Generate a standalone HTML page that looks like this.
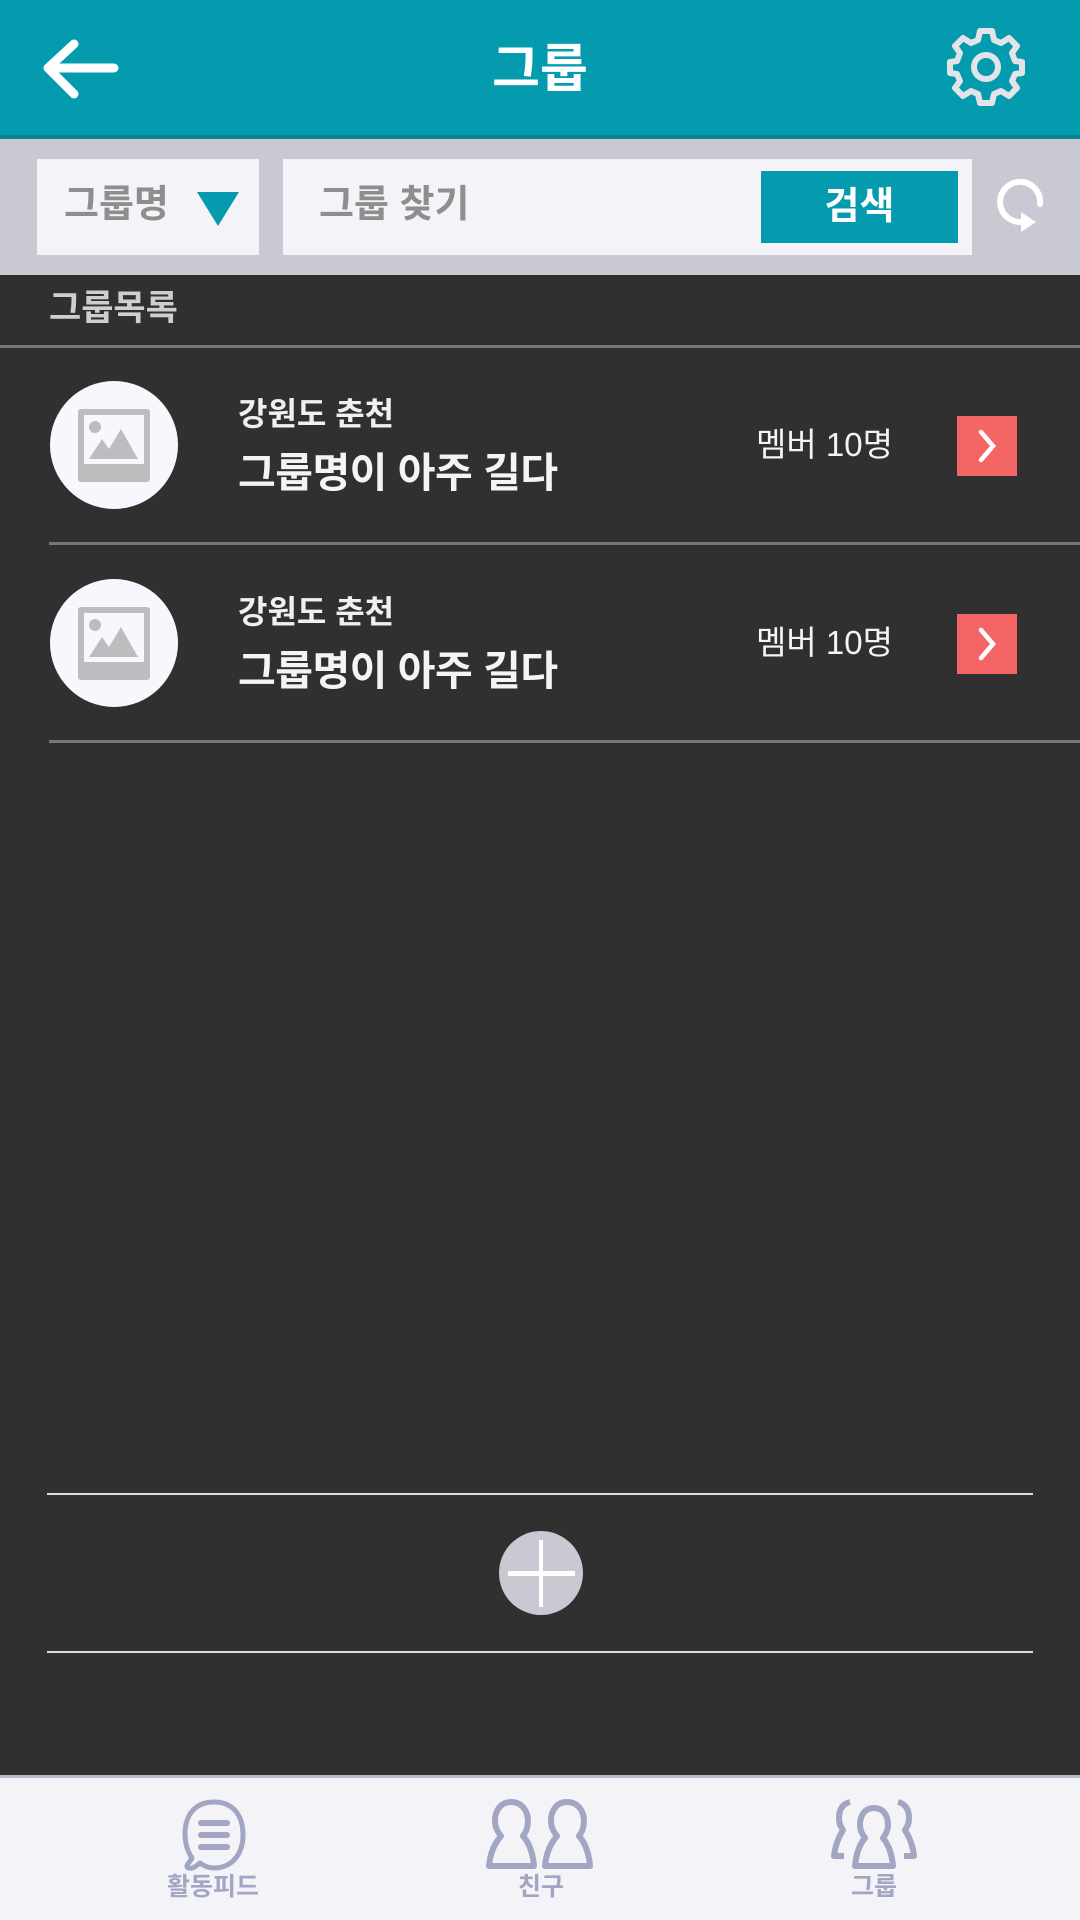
<!DOCTYPE html>
<html><head><meta charset="utf-8"><style>
*{margin:0;padding:0;box-sizing:border-box}
body{width:1080px;height:1920px;background:#303030;position:relative;overflow:hidden;font-family:"Liberation Sans","Noto Sans CJK KR",sans-serif}
.abs{position:absolute}
.t{white-space:nowrap;line-height:1}
</style></head><body>
<!-- header -->
<div class="abs" style="left:0;top:0;width:1080px;height:135px;background:#039bad"></div>
<div class="abs" style="left:0;top:135px;width:1080px;height:4px;background:#058592"></div>
<svg class="abs" style="left:40px;top:38px" width="80" height="64" viewBox="0 0 80 64"><path d="M34 6 L8 30 L34 56 M8 30 L74 30" fill="none" stroke="#fff" stroke-width="9" stroke-linecap="round" stroke-linejoin="round"/></svg>
<div class="abs t" style="left:0;width:1080px;top:44px;text-align:center;color:#fff;font-size:52px;font-weight:bold">그룹</div>
<svg class="abs" style="left:946px;top:27px" width="80" height="80" viewBox="-40 -40 80 80">
<path d="M-6 -36 L6 -36 L8 -27 L15 -24 L23 -29 L31 -21 L26 -14 L29 -6 L36 -5 L36 6 L29 7 L26 14 L31 21 L23 29 L15 24 L8 27 L6 36 L-6 36 L-8 27 L-15 24 L-23 29 L-31 21 L-26 14 L-29 7 L-36 6 L-36 -5 L-29 -6 L-26 -14 L-31 -21 L-23 -29 L-15 -24 L-8 -27 Z" fill="none" stroke="#e4e4e8" stroke-width="6" stroke-linejoin="round"/>
<circle r="12" fill="none" stroke="#e4e4e8" stroke-width="6"/></svg>
<!-- search bar -->
<div class="abs" style="left:0;top:139px;width:1080px;height:136px;background:#c9c9d3"></div>
<div class="abs" style="left:37px;top:159px;width:222px;height:96px;background:#f3f3f8"></div>
<div class="abs t" style="left:64px;top:186px;color:#8e8e8e;font-size:38px;font-weight:bold">그룹명</div>
<svg class="abs" style="left:197px;top:192px" width="44" height="36"><path d="M0 0 L42 0 L21 34 Z" fill="#039bad"/></svg>
<div class="abs" style="left:283px;top:159px;width:689px;height:96px;background:#f3f3f8"></div>
<div class="abs t" style="left:319px;top:186px;color:#8e8e8e;font-size:38px;font-weight:bold">그룹 찾기</div>
<div class="abs" style="left:761px;top:171px;width:197px;height:72px;background:#039bad"></div>
<div class="abs t" style="left:761px;width:197px;top:188px;text-align:center;color:#fff;font-size:38px;font-weight:bold">검색</div>
<svg class="abs" style="left:996px;top:176px" width="56" height="60" viewBox="0 0 56 60"><path d="M44 28 A20 20 0 1 0 30 45" fill="none" stroke="#fff" stroke-width="6" stroke-linecap="round"/><path d="M25 36 L40 46 L25 56 Z" fill="#fff"/></svg>
<!-- list header -->
<div class="abs t" style="left:49px;top:291px;color:#cfcfcf;font-size:35px;font-weight:bold">그룹목록</div>
<div class="abs" style="left:0;top:345px;width:1080px;height:3px;background:#767676"></div>
<!-- items -->
<div class="abs" style="left:0;top:0">
 <div class="abs" style="left:50px;top:381px;width:128px;height:128px;border-radius:50%;background:#f7f8fe"></div>
 <svg class="abs" style="left:78px;top:409px" width="72" height="73" viewBox="0 0 72 73"><rect width="72" height="73" rx="3" fill="#bdbdc0"/><rect x="6" y="6" width="60" height="49" fill="#f7f8fe"/><circle cx="17" cy="18" r="6" fill="#bdbdc0"/><path d="M11 50 L24 30 L31 40 L43 20 L60 50 Z" fill="#bdbdc0"/></svg>
 <div class="abs t" style="left:238px;top:398px;color:#f0f0f0;font-size:32px;font-weight:bold">강원도 춘천</div>
 <div class="abs t" style="left:238px;top:453px;color:#f4f4f6;font-size:41px;font-weight:bold;letter-spacing:-0.5px">그룹명이 아주 길다</div>
 <div class="abs t" style="left:756px;top:428px;color:#f4f4f4;font-size:33px">멤버 10명</div>
 <div class="abs" style="left:957px;top:416px;width:60px;height:60px;background:#f46666"></div>
 <svg class="abs" style="left:957px;top:416px" width="60" height="60"><path d="M24 16 L36 30 L24 44" fill="none" stroke="#fff" stroke-width="4.5" stroke-linecap="round"/></svg>
 <div class="abs" style="left:49px;top:542px;width:1031px;height:3px;background:#767676"></div>
</div>
<div class="abs" style="left:0;top:198px">
 <div class="abs" style="left:50px;top:381px;width:128px;height:128px;border-radius:50%;background:#f7f8fe"></div>
 <svg class="abs" style="left:78px;top:409px" width="72" height="73" viewBox="0 0 72 73"><rect width="72" height="73" rx="3" fill="#bdbdc0"/><rect x="6" y="6" width="60" height="49" fill="#f7f8fe"/><circle cx="17" cy="18" r="6" fill="#bdbdc0"/><path d="M11 50 L24 30 L31 40 L43 20 L60 50 Z" fill="#bdbdc0"/></svg>
 <div class="abs t" style="left:238px;top:398px;color:#f0f0f0;font-size:32px;font-weight:bold">강원도 춘천</div>
 <div class="abs t" style="left:238px;top:453px;color:#f4f4f6;font-size:41px;font-weight:bold;letter-spacing:-0.5px">그룹명이 아주 길다</div>
 <div class="abs t" style="left:756px;top:428px;color:#f4f4f4;font-size:33px">멤버 10명</div>
 <div class="abs" style="left:957px;top:416px;width:60px;height:60px;background:#f46666"></div>
 <svg class="abs" style="left:957px;top:416px" width="60" height="60"><path d="M24 16 L36 30 L24 44" fill="none" stroke="#fff" stroke-width="4.5" stroke-linecap="round"/></svg>
 <div class="abs" style="left:49px;top:542px;width:1031px;height:3px;background:#767676"></div>
</div>
<!-- add -->
<div class="abs" style="left:47px;top:1493px;width:986px;height:2px;background:#dcdcdc"></div>
<div class="abs" style="left:499px;top:1531px;width:84px;height:84px;border-radius:50%;background:#c9c9d3"></div>
<div class="abs" style="left:539px;top:1540px;width:4px;height:67px;background:#fff"></div>
<div class="abs" style="left:508px;top:1571px;width:67px;height:5px;background:#fff"></div>
<div class="abs" style="left:47px;top:1651px;width:986px;height:2px;background:#dcdcdc"></div>
<!-- nav -->
<div class="abs" style="left:0;top:1775px;width:1080px;height:145px;background:#f3f3f8;border-top:3px solid #b8bad0"></div>
<svg class="abs" style="left:178px;top:1798px" width="72" height="74" viewBox="0 0 72 74"><path d="M36 4 C18 4 7 16 7 36 C7 46 10 54 14 60 C12 64 9 66 9 68 C9 71 14 71 18 68 L22 65 C26 68 30 70 36 70 C54 70 65 56 65 37 C65 16 54 4 36 4 Z" fill="none" stroke="#a2a6c2" stroke-width="5" stroke-linejoin="round"/><rect x="20" y="22" width="32" height="6" rx="3" fill="#a2a6c2"/><rect x="20" y="34" width="32" height="6" rx="3" fill="#a2a6c2"/><rect x="20" y="46" width="32" height="6" rx="3" fill="#a2a6c2"/></svg>
<svg class="abs" style="left:483px;top:1798px" width="114" height="72" viewBox="0 0 114 72">
<g fill="none" stroke="#a2a6c2" stroke-width="6" stroke-linejoin="round"><path d="M28 4 C18 4 12 12 12 23 C12 30 15 34 18 38 C11 46 7 56 6 68 L51 68 C50 56 47 46 40 38 C43 34 45 30 45 23 C45 12 38 4 28 4 Z"/><path d="M84 4 C74 4 68 12 68 23 C68 30 71 34 74 38 C67 46 63 56 62 68 L107 68 C106 56 103 46 96 38 C99 34 101 30 101 23 C101 12 94 4 84 4 Z"/></g></svg>
<svg class="abs" style="left:828px;top:1798px" width="92" height="72" viewBox="0 0 92 72">
<g fill="none" stroke="#a2a6c2" stroke-width="6" stroke-linejoin="round"><path d="M46 10 C37 10 32 17 32 27 C32 33 35 37 37 40 C31 47 28 57 27 68 L65 68 C64 57 61 47 55 40 C57 37 60 33 60 27 C60 17 55 10 46 10 Z"/><path d="M22 4 C14 6 11 12 11 20 C11 26 13 29 15 32 C10 40 7 48 6 58 L16 58"/><path d="M70 4 C78 6 81 12 81 20 C81 26 79 29 77 32 C82 40 85 48 86 58 L76 58"/></g></svg>
<div class="abs t" style="left:113px;width:200px;top:1875px;text-align:center;color:#a2a6c2;font-size:25px;font-weight:bold">활동피드</div>
<div class="abs t" style="left:441px;width:200px;top:1875px;text-align:center;color:#a2a6c2;font-size:25px;font-weight:bold">친구</div>
<div class="abs t" style="left:774px;width:200px;top:1875px;text-align:center;color:#a2a6c2;font-size:25px;font-weight:bold">그룹</div>
</body></html>
